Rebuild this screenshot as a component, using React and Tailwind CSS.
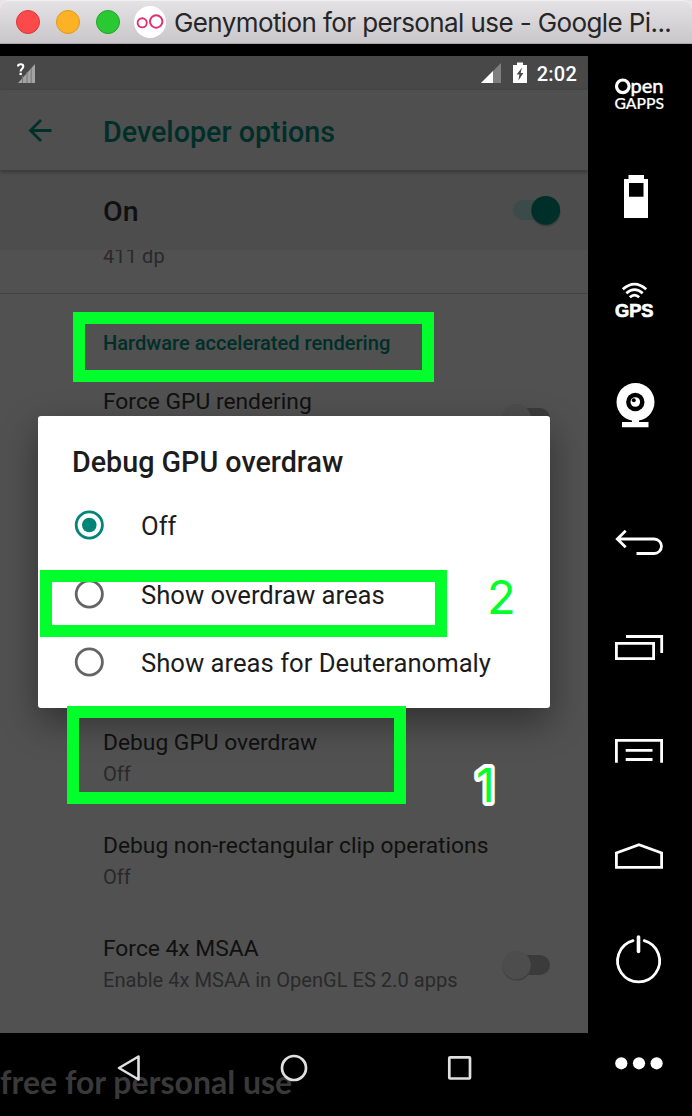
import React from 'react';

function TitleBar() {
  return (
    <header className="flex h-11 shrink-0 items-center rounded-t-[9px] border-t border-b border-t-[#f2f1f2] border-b-[#aaa8aa] bg-gradient-to-b from-[#e4e2e4] to-[#c9c7c9] pl-4">
      <div className="flex gap-4">
        <span className="size-6 rounded-full border border-[#e0343a] bg-[#fc4a4b]" />
        <span className="size-6 rounded-full border border-[#de9a1a] bg-[#fdb125]" />
        <span className="size-6 rounded-full border border-[#1fa527] bg-[#2ac833]" />
      </div>
      <svg className="ml-[14px] size-8" viewBox="0 0 32 32" fill="none" stroke="#e0306e">
        <circle cx="16" cy="16" r="16" fill="#fff" stroke="none" />
        <circle cx="8.2" cy="16.8" r="4.6" strokeWidth="1.9" />
        <circle cx="22.2" cy="15.5" r="6.2" strokeWidth="2" />
      </svg>
      <h1 className="ml-[8px] whitespace-nowrap pt-[2px] font-['Inter',sans-serif] text-[26px] leading-8 tracking-[-0.6px] text-[#262528]">
        Genymotion for personal use - Google Pi...
      </h1>
    </header>
  );
}

function StatusBar() {
  return (
    <div className="flex h-[34px] shrink-0 items-center bg-[#484848] pl-4 pr-[11px]">
      <svg className="h-6 w-6" viewBox="16 61 24 24">
        <path d="M18 83L35 64V83Z" fill="#a3a3a3" />
        <path d="M22.5 76V83M27 72V83M31.2 68V83" stroke="#777" strokeWidth="1" />
        <path d="M18 61h7.500v8L18 77Z" fill="#484848" />
        <path d="M18 66.500c0-3 5.300-3 5.300 0 0 2.300-2.700 2.300-2.700 5" fill="none" stroke="#fff" strokeWidth="2.100" />
        <rect x="19.500" y="72.800" width="2.300" height="2.300" fill="#fff" />
      </svg>
      <svg className="ml-auto h-6 w-12" viewBox="480 61 48 24">
        <path d="M481 83L501 63V83Z" fill="#7f7f7f" />
        <path d="M481 83L493 71V83Z" fill="#fff" />
        <path d="M513 65h4v-2.500h6V65h4v18h-14Z" fill="#fff" />
        <path d="M522 67.500l-5.300 7h2.700l-1 6 5-7.500h-2.800Z" fill="#484848" />
      </svg>
      <span className="ml-[9px] pt-[1px] text-xl leading-6 font-medium tracking-[0.25px] text-white">2:02</span>
    </div>
  );
}

function OffSwitch() {
  return (
    <svg className="h-10 w-14 shrink-0" viewBox="0 0 56 40">
      <rect x="8" y="10" width="44" height="20" rx="10" fill="#3b3b3b" />
      <circle cx="18.700" cy="21.200" r="14.400" fill="#3f3f3f" />
      <circle cx="18.500" cy="20" r="14.300" fill="#4d4d4d" />
    </svg>
  );
}

function Preference({ title, summary }) {
  return (
    <div className="h-[103px] pt-[1px]">
      <p className="text-[22.8px] leading-7 text-[#101010]">{title}</p>
      <p className="mt-[5px] text-[20.1px] leading-6 text-[#292929]">{summary}</p>
    </div>
  );
}

function Settings() {
  return (
    <div className="flex h-[943px] flex-col bg-[#515151]">
      <div className="z-10 flex h-20 shrink-0 items-center bg-[#4f4f4f] pl-[27px] shadow-[0_2px_4px_rgba(0,0,0,0.3)]">
        <svg className="mt-[2px] h-7 w-7" viewBox="26 117 28 28" fill="none" stroke="#003029" strokeWidth="2.800">
          <path d="M50.500 130.500H29.500M40 120L29.500 130.500l10.500 10.500" />
        </svg>
        <h2 className="ml-[48px] pt-[3px] text-[28.7px] leading-8 font-medium text-[#002e28]">Developer options</h2>
      </div>
      <div className="flex h-20 shrink-0 items-center bg-[#4d4d4d] pl-[103px] pr-6">
        <span className="pt-[4px] text-[28.5px] leading-8 font-medium text-[#101010]">On</span>
        <svg className="ml-auto h-10 w-14" viewBox="508 190 56 40">
          <rect x="513" y="200" width="40" height="20" rx="10" fill="#3a4b49" />
          <circle cx="546" cy="212" r="14.500" fill="#3b3f3e" />
          <circle cx="545.700" cy="210.300" r="14.400" fill="#002e28" />
        </svg>
      </div>
      <div className="flex h-[44px] shrink-0 items-start overflow-hidden border-b border-[#424242] pl-[103px]">
        <p className="-mt-[6px] text-xl leading-6 tracking-[0.1px] text-[#292929]">411 dp</p>
      </div>
      <div className="flex h-[94px] shrink-0 pl-[103px] pt-[37px]">
        <h3 className="text-[20.1px] leading-6 font-medium text-[#002e28]">Hardware accelerated rendering</h3>
      </div>
      <div className="flex h-[340px] shrink-0 justify-between pl-[103px] pr-[34px]">
        <p className="text-[22.8px] leading-7 text-[#101010]">Force GPU rendering</p>
        <div className="pt-[10px]"><OffSwitch /></div>
      </div>
      <div className="flex flex-col pl-[103px]">
        <Preference title="Debug GPU overdraw" summary="Off" />
        <Preference title="Debug non-rectangular clip operations" summary="Off" />
        <div className="flex justify-between pr-[34px]">
          <Preference title="Force 4x MSAA" summary="Enable 4x MSAA in OpenGL ES 2.0 apps" />
          <div className="pt-[11px]"><OffSwitch /></div>
        </div>
      </div>
    </div>
  );
}

function Option({ label, checked }) {
  return (
    <div className="flex h-[68.6px] items-center pl-[36px]">
      <svg className="size-[30px]" viewBox="0 0 30 30" fill="none">
        <circle cx="15.300" cy="15" r="13.100" stroke={checked ? '#008577' : '#646464'} strokeWidth="2.800" />
        {checked && <circle cx="15.300" cy="15" r="7.300" fill="#008577" />}
      </svg>
      <span className="ml-[37px] pt-[2px] text-[25.65px] leading-8 text-[#1c1c1c]">{label}</span>
    </div>
  );
}

function Dialog() {
  return (
    <section className="absolute left-[38px] top-[416px] h-[292px] w-[512px] rounded-[3px] bg-white shadow-[0_14px_36px_rgba(0,0,0,0.4)]">
      <h2 className="pl-[34px] pt-[30px] text-[28.7px] leading-8 font-medium text-[#1c1c1c]">Debug GPU overdraw</h2>
      <div className="pt-[13px]">
        <Option label="Off" checked />
        <Option label="Show overdraw areas" />
        <Option label="Show areas for Deuteranomaly" />
      </div>
    </section>
  );
}

function NavBar() {
  return (
    <nav className="relative h-[83px] w-[588px] shrink-0 overflow-hidden bg-black">
      <p className="whitespace-nowrap pt-[29px] font-['Lato',sans-serif] text-[32px] leading-10 font-bold text-[#393939]">free for personal use</p>
      <div className="absolute inset-0 flex items-start pt-[19px] pl-[113px]">
        <svg className="h-8 w-8" viewBox="113 1052 32 32" fill="none" stroke="#e0e0e0" strokeWidth="2.600" strokeLinejoin="round">
          <path d="M138.500 1056.500V1079.500L119 1068Z" />
        </svg>
        <svg className="ml-[133px] h-8 w-8" viewBox="278 1052 32 32" fill="none" stroke="#e0e0e0" strokeWidth="2.700">
          <circle cx="294" cy="1068" r="12" />
        </svg>
        <svg className="ml-[133px] h-8 w-8" viewBox="443 1052 32 32" fill="none" stroke="#e0e0e0" strokeWidth="2.700">
          <rect x="449.300" y="1057.300" width="20.700" height="21.200" rx="0.800" />
        </svg>
      </div>
    </nav>
  );
}

const LINE = { fill: 'none', stroke: '#fff', strokeWidth: 2.8 };

function Toolbar() {
  return (
    <aside className="flex w-[104px] shrink-0 flex-col bg-black">
      <svg className="h-[102px] w-[104px]" viewBox="588 44 104 102" fill="#fff">
        <circle cx="622.800" cy="86.300" r="6.300" fill="none" stroke="#fff" strokeWidth="3.200" />
        <text x="630.500" y="92.700" textLength="33" lengthAdjust="spacingAndGlyphs" className="font-['Lato',sans-serif] text-[20px] font-medium" stroke="#fff" strokeWidth="0.400">pen</text>
        <text x="614.500" y="109.300" textLength="49.500" lengthAdjust="spacingAndGlyphs" className="font-['Lato',sans-serif] text-[14.500px] font-medium" stroke="#fff" strokeWidth="0.200">GAPPS</text>
      </svg>
      <svg className="h-[103px] w-[104px]" viewBox="588 146 104 103">
        <path fill="#fff" fillRule="evenodd" d="M628.500 175H644v4h4v39h-24v-39h4.500ZM629 183v13.700h14.500V183Z" />
      </svg>
      <svg className="h-[103px] w-[104px]" viewBox="588 249 104 103" fill="none" stroke="#fff" strokeWidth="2.700">
        <path d="M622.800 289.300Q634.500 279 646.200 289.300M626.300 293.300Q634.500 286 642.700 293.300M629.800 297.300Q634.500 293 639.200 297.300" />
        <text x="615" y="316.600" textLength="38.500" lengthAdjust="spacingAndGlyphs" fill="#fff" strokeWidth="0.700" className="font-['Liberation_Sans',sans-serif] text-[17.500px] font-bold">GPS</text>
      </svg>
      <svg className="h-[103px] w-[104px]" viewBox="588 352 104 103" fill="#fff">
        <circle cx="635.500" cy="402" r="19" />
        <path d="M632 419h7v3h9.500v5.300h-26.500V422h10Z" />
        <circle cx="635.300" cy="402" r="9.200" fill="#000" />
        <circle cx="635.300" cy="402" r="4.800" />
        <circle cx="633.800" cy="400.300" r="2" fill="#000" />
      </svg>
      <svg className="h-[140px] w-[104px]" viewBox="588 455 104 140" {...LINE}>
        <path d="M625.700 530.800L617.300 539l8.400 8.200M617.300 539H654.200a7.250 7.250 0 0 1 0 14.500H636.500" />
      </svg>
      <svg className="h-[105px] w-[104px]" viewBox="588 595 104 105" {...LINE}>
        <path d="M616.400 643.400H653.600V658.600H616.400ZM626 636.500H661.700V653" />
      </svg>
      <svg className="h-[104px] w-[104px]" viewBox="588 700 104 104" {...LINE}>
        <path d="M616.400 762.700V740.300H661.600V762.700M625.700 750.300H652.500M625.700 759.500H652.500" />
      </svg>
      <svg className="h-[104px] w-[104px]" viewBox="588 804 104 104" {...LINE}>
        <path d="M616.400 867.400V853L639 844.800 661.600 853V867.400Z" />
      </svg>
      <svg className="h-[104px] w-[104px]" viewBox="588 908 104 104" {...LINE} strokeLinecap="round">
        <path d="M633 940.600A21 21 0 1 0 644.200 940.600" />
        <path d="M638.500 937V951.500" strokeWidth="3.600" />
      </svg>
      <svg className="h-[104px] w-[104px]" viewBox="588 1012 104 104" fill="#fff">
        <circle cx="621.300" cy="1063.300" r="6.100" />
        <circle cx="639" cy="1063.300" r="6.100" />
        <circle cx="656.600" cy="1063.300" r="6.100" />
      </svg>
    </aside>
  );
}

export default function App() {
  return (
    <div className="relative h-[1116px] w-[692px] overflow-hidden bg-[#e9e3e8] font-['Roboto',sans-serif]">
      <TitleBar />
      <div className="flex h-[1072px] overflow-hidden bg-black">
        <div className="flex w-[588px] shrink-0 flex-col pt-3">
          <div className="h-[977px] shrink-0 overflow-hidden">
            <StatusBar />
            <Settings />
          </div>
          <NavBar />
        </div>
        <Toolbar />
      </div>
      <div className="absolute inset-y-0 left-0 z-20 w-[588px] overflow-hidden">
        <Dialog />
        <div className="absolute left-[73px] top-[312px] h-[70px] w-[361px] border-[12px] border-[#00ff2b]" />
        <div className="absolute left-[40px] top-[570px] h-[67px] w-[407px] border-[12px] border-[#00ff2b]" />
        <div className="absolute left-[67px] top-[706px] h-[98px] w-[339px] border-[12px] border-[#00ff2b]" />
        <span className="absolute left-[487px] top-[573px] font-['Inter',sans-serif] text-[47px] leading-[48px] text-[#00ff2b]">2</span>
        <svg className="absolute left-[464px] top-[755px] h-[60px] w-[44px]" viewBox="464 755 44 60">
          <text x="476" y="802" fill="#00ff2b" stroke="#fff" strokeWidth="8" strokeLinejoin="round" paintOrder="stroke" className="font-['Inter',sans-serif] text-[46px]">1</text>
        </svg>
      </div>
    </div>
  );
}
